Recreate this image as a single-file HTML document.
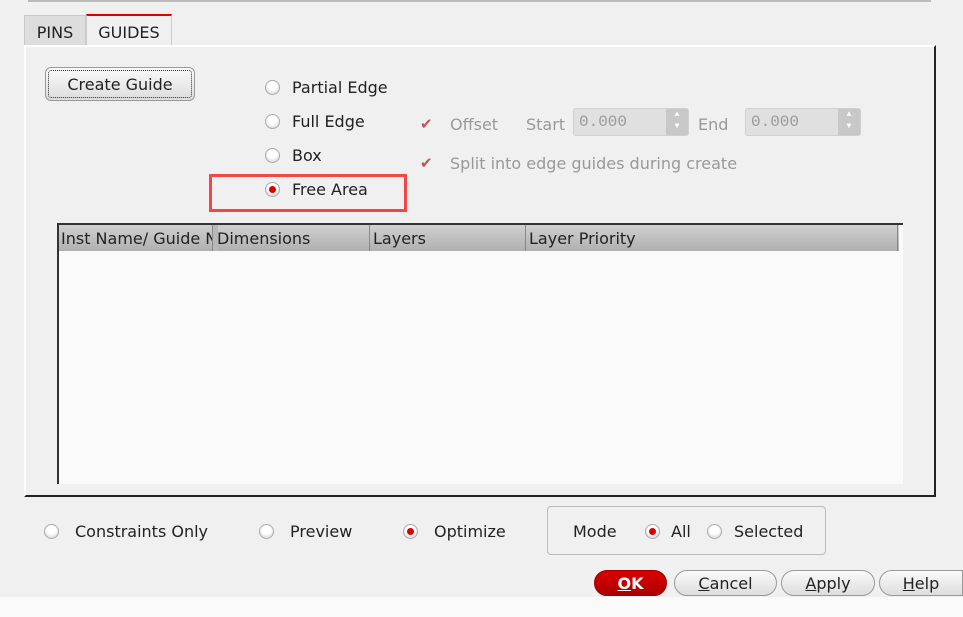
<!DOCTYPE html>
<html><head><style>
body{margin:0;width:963px;height:617px;background:#f0f0f0;font-family:"DejaVu Sans","Liberation Sans",sans-serif;font-size:16px;color:#222;position:relative;overflow:hidden}
.a{position:absolute;white-space:nowrap}
.radio{position:absolute;width:15px;height:15px;border-radius:50%;background:radial-gradient(circle at 50% 35%,#fff 40%,#ccc 100%);border:1px solid #aaa;box-sizing:border-box}
.radio.on::after{content:"";position:absolute;left:3px;top:3px;width:7px;height:7px;border-radius:50%;background:#d00}
.btn{position:absolute;height:26px;border:1px solid #999;border-radius:13px;background:linear-gradient(#fafafa,#ddd);text-align:center;line-height:25px;font-size:16px;box-sizing:border-box}
.cb{position:absolute;width:14px;height:14px;color:#b55;font-size:15px;line-height:14px}
.gray{color:#999}
.spin{position:absolute;height:28px;background:#e0e0e0;border:1px solid #d0d0d0;border-radius:3px;box-sizing:border-box;font-family:"Liberation Mono",monospace;color:#999;font-size:16px;line-height:26px;padding-left:5px}
.spin i{position:absolute;right:0;top:0;width:22px;height:26px;background:#c8c8c8;font-style:normal;font-size:8px;line-height:12px;text-align:center;color:#fff}
</style></head><body>
<div class="a" style="left:28px;top:0;width:903px;height:2px;background:#bbb"></div>
<div class="a" style="left:24px;top:15px;width:62px;height:31px;background:#ddd;border:1px solid #c8c8c8;box-sizing:border-box;line-height:34px;text-align:center">PINS</div>
<div class="a" style="left:86px;top:14px;width:86px;height:33px;background:#f0f0f0;border:1px solid #ccc;border-top:2px solid #d00;border-bottom:none;box-sizing:border-box;line-height:34px;text-align:center">GUIDES</div>
<div class="a" style="left:24px;top:45px;width:912px;height:452px;border-top:2px solid #fff;border-left:2px solid #fff;border-right:2px solid #222;border-bottom:2px solid #222;box-sizing:border-box"></div>
<div class="btn" style="left:45px;top:67px;width:150px;height:34px;border-radius:6px;line-height:33px;outline:1px dotted #333;outline-offset:-4px">Create Guide</div>
<div class="radio" style="left:265px;top:80px"></div><div class="a" style="left:292px;top:78px">Partial Edge</div>
<div class="radio" style="left:265px;top:114px"></div><div class="a" style="left:292px;top:112px">Full Edge</div>
<div class="radio" style="left:265px;top:148px"></div><div class="a" style="left:292px;top:146px">Box</div>
<div class="radio on" style="left:265px;top:182px"></div><div class="a" style="left:292px;top:180px">Free Area</div>
<div class="a" style="left:209px;top:174px;width:198px;height:38px;border:3px solid #f04848;box-sizing:border-box"></div>
<div class="cb" style="left:420px;top:117px">✔</div><div class="a gray" style="left:450px;top:115px">Offset</div>
<div class="a gray" style="left:526px;top:115px">Start</div>
<div class="spin" style="left:573px;top:108px;width:116px">0.000<i>▲<br>▼</i></div>
<div class="a gray" style="left:698px;top:115px">End</div>
<div class="spin" style="left:745px;top:108px;width:116px">0.000<i>▲<br>▼</i></div>
<div class="cb" style="left:420px;top:156px">✔</div><div class="a gray" style="left:450px;top:154px">Split into edge guides during create</div>
<div class="a" style="left:57px;top:223px;width:846px;height:261px;background:#fafafa;border-top:2px solid #333;border-left:2px solid #333;box-sizing:border-box"></div>
<div class="a" style="left:59px;top:225px;width:840px;height:26px;background:linear-gradient(#d0d0d0,#b0b0b0)"></div>
<div class="a" style="left:61px;top:229px;width:151px;overflow:hidden">Inst Name/ Guide N</div>
<div class="a" style="left:212px;top:225px;width:5px;height:26px;background:#b8b8b8;border-left:1px solid #888"></div>
<div class="a" style="left:217px;top:229px">Dimensions</div>
<div class="a" style="left:369px;top:225px;width:1px;height:26px;background:#888"></div>
<div class="a" style="left:373px;top:229px">Layers</div>
<div class="a" style="left:525px;top:225px;width:1px;height:26px;background:#888"></div>
<div class="a" style="left:529px;top:229px">Layer Priority</div>
<div class="a" style="left:897px;top:225px;width:1px;height:26px;background:#888"></div>
<div class="radio" style="left:44px;top:524px"></div><div class="a" style="left:75px;top:522px">Constraints Only</div>
<div class="radio" style="left:259px;top:524px"></div><div class="a" style="left:290px;top:522px">Preview</div>
<div class="radio on" style="left:403px;top:524px"></div><div class="a" style="left:434px;top:522px">Optimize</div>
<div class="a" style="left:547px;top:506px;width:279px;height:49px;border:1px solid #bbb;border-radius:4px;box-sizing:border-box"></div>
<div class="a" style="left:573px;top:522px">Mode</div>
<div class="radio on" style="left:645px;top:524px"></div><div class="a" style="left:671px;top:522px">All</div>
<div class="radio" style="left:707px;top:524px"></div><div class="a" style="left:734px;top:522px">Selected</div>
<div class="a" style="left:0;top:597px;width:963px;height:20px;background:#fafafa"></div>
<div class="btn" style="left:594px;top:570px;width:73px;background:linear-gradient(#d00,#a00);border-color:#900;color:#fff;font-weight:bold"><u>O</u>K</div>
<div class="btn" style="left:674px;top:570px;width:103px"><u>C</u>ancel</div>
<div class="btn" style="left:781px;top:570px;width:94px"><u>A</u>pply</div>
<div class="btn" style="left:879px;top:570px;width:84px;border-radius:13px 0 0 13px"><u>H</u>elp</div>
</body></html>
